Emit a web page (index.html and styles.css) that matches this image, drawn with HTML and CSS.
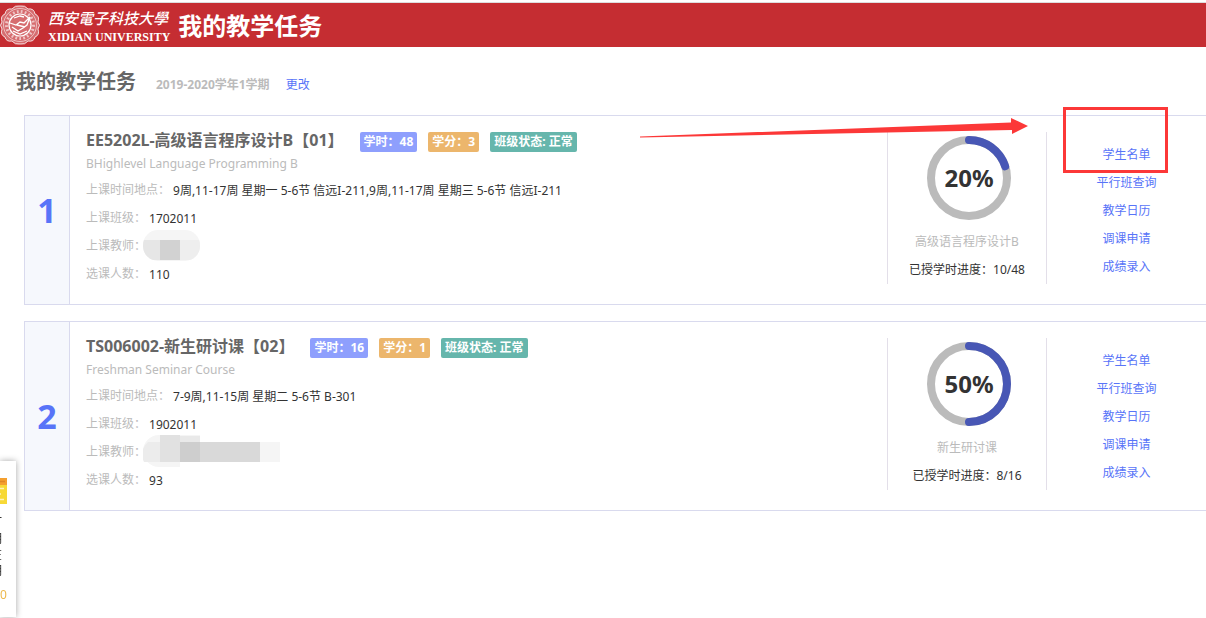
FILE: index.html
```
<!DOCTYPE html>
<html lang="zh-CN">
<head>
  <meta charset="UTF-8">
  <meta name="viewport" content="width=device-width, initial-scale=1.0">
  <title>我的教学任务</title>
  <link rel="stylesheet" href="styles.css">
</head>
<body>
  <header class="topbar">
    <svg class="emblem" viewBox="0 0 40 40" fill="none" stroke="#fff">
      <path d="M20 1Q25 0 28 4Q34 3 35 9Q40 11 38 17Q41 20 38 24Q40 30 35 32Q34 37 28 36Q25 40 20 39Q15 40 12 36Q6 37 5 32Q0 30 2 24Q-1 20 2 17Q0 11 5 9Q6 3 12 4Q15 0 20 1Z" fill="#fff" fill-opacity=".3" stroke-width="1" stroke-opacity=".8"/>
      <circle cx="20" cy="20" r="13.500" stroke-width="3" stroke-dasharray="1.800 2.200" opacity=".6"/>
      <circle cx="20" cy="20" r="16.500" stroke-width=".8" opacity=".7"/>
      <circle cx="20" cy="20" r="11" stroke-width="1.200"/>
      <path d="M10 18L16 20L20 17L24 18L30 12L27 20L23 23L18 26L12 22M13 26L20 29L27 26M14 13L20 11L24 12M17 20L25 22" stroke-width="1.300"/>
    </svg>
    <div class="school">
      <span class="school-cn">西安電子科技大學</span>
      <span class="school-en">XIDIAN UNIVERSITY</span>
    </div>
    <h1>我的教学任务</h1>
  </header>

  <main>
    <div class="page-title">
      <h2>我的教学任务</h2>
      <span class="term">2019-2020学年1学期</span>
      <a href="#">更改</a>
    </div>

    <section class="card">
      <div class="index">1</div>
      <div class="info">
        <div class="info-head">
          <h3>EE5202L-高级语言程序设计B【01】</h3>
          <span class="badge hours">学时：48</span>
          <span class="badge credit">学分：3</span>
          <span class="badge status">班级状态: 正常</span>
        </div>
        <p class="en-name">BHighlevel Language Programming B</p>
        <dl>
          <div class="row"><dt>上课时间地点：</dt><dd>9周,11-17周 星期一 5-6节 信远I-211,9周,11-17周 星期三 5-6节 信远I-211</dd></div>
          <div class="row"><dt>上课班级：</dt><dd>1702011</dd></div>
          <div class="row masked">
            <dt>上课教师：</dt>
            <dd>
              <svg width="57" height="31" viewBox="0 0 57 31">
                <clipPath id="pill"><rect width="57" height="31" rx="15"/></clipPath>
                <g clip-path="url(#pill)">
                  <rect width="57" height="31" fill="#f5f5f5"/>
                  <rect y="10" width="17" height="20" fill="#e6e6e6"/>
                  <rect x="17" y="10" width="20" height="20" fill="#d2d2d2"/>
                  <rect x="37" y="10" width="20" height="20" fill="#eee"/>
                </g>
              </svg>
            </dd>
          </div>
          <div class="row"><dt>选课人数：</dt><dd>110</dd></div>
        </dl>
      </div>
      <div class="progress">
        <div class="ring">
          <svg viewBox="0 0 84 84">
            <circle class="track" cx="42" cy="42" r="38"/>
            <circle class="bar" cx="42" cy="42" r="38" pathLength="100" stroke-dasharray="20 100"/>
          </svg>
          <strong>20%</strong>
        </div>
        <p class="course">高级语言程序设计B</p>
        <p>已授学时进度：10/48</p>
      </div>
      <nav class="links">
        <a href="#">学生名单</a>
        <a href="#">平行班查询</a>
        <a href="#">教学日历</a>
        <a href="#">调课申请</a>
        <a href="#">成绩录入</a>
      </nav>
      <svg class="arrow" viewBox="0 0 390 20"><path d="M1 18.500L372 4.500V0L389 8L373 16V12L1 19.500Z"/></svg>
      <span class="highlight"></span>
    </section>

    <section class="card">
      <div class="index">2</div>
      <div class="info">
        <div class="info-head">
          <h3>TS006002-新生研讨课【02】</h3>
          <span class="badge hours">学时：16</span>
          <span class="badge credit">学分：1</span>
          <span class="badge status">班级状态: 正常</span>
        </div>
        <p class="en-name">Freshman Seminar Course</p>
        <dl>
          <div class="row"><dt>上课时间地点：</dt><dd>7-9周,11-15周 星期二 5-6节 B-301</dd></div>
          <div class="row"><dt>上课班级：</dt><dd>1902011</dd></div>
          <div class="row masked">
            <dt>上课教师：</dt>
            <dd>
              <svg width="137" height="32" viewBox="0 0 137 32">
                <path d="M16 0H57V7H137V27H37V32H16A16 16 0 0 1 16 0Z" fill="#f5f5f5"/>
                <path d="M17 7V27H1A16 16 0 0 1 5 7Z" fill="#ececec"/>
                <rect x="17" width="20" height="27" fill="#e1e1e1"/>
                <rect x="37" y="1" width="20" height="6" fill="#e9e9e9"/>
                <rect x="37" y="7" width="20" height="20" fill="#cecece"/>
                <rect x="57" y="7" width="60" height="20" fill="#d9d9d9"/>
              </svg>
            </dd>
          </div>
          <div class="row"><dt>选课人数：</dt><dd>93</dd></div>
        </dl>
      </div>
      <div class="progress">
        <div class="ring">
          <svg viewBox="0 0 84 84">
            <circle class="track" cx="42" cy="42" r="38"/>
            <circle class="bar" cx="42" cy="42" r="38" pathLength="100" stroke-dasharray="50 100"/>
          </svg>
          <strong>50%</strong>
        </div>
        <p class="course">新生研讨课</p>
        <p>已授学时进度：8/16</p>
      </div>
      <nav class="links">
        <a href="#">学生名单</a>
        <a href="#">平行班查询</a>
        <a href="#">教学日历</a>
        <a href="#">调课申请</a>
        <a href="#">成绩录入</a>
      </nav>
    </section>
  </main>

  <!-- collapsed side panel, only its right edge shows -->
  <aside class="side-panel">
    <svg width="8" height="26" viewBox="0 0 8 26">
      <rect width="7" height="26" fill="#f7d936"/>
      <rect width="7" height="7" fill="#f49f2f"/>
      <path d="M0 3.500H5" stroke="#de8726" stroke-width="1.500"/>
      <path d="M0 10.500H4M0 16H1M0 21.500H4" stroke="#fff3b8" stroke-width="1.500"/>
    </svg>
    <div class="side-text">订明在明</div>
    <span class="side-count">0</span>
  </aside>
</body>
</html>
```
FILE: styles.css
```
:root {
  --red: #c52d32;
  --link: #5874f8;
  --muted: #bbb;
  --dark: #333;
  --line: #d9daee;
  --mark: #fc3838;
}

* {
  box-sizing: border-box;
  margin: 0;
  padding: 0;
}

body {
  font-family: "Noto Sans", "Noto Sans CJK SC", sans-serif;
  font-size: 12px;
  line-height: 28px;
  color: var(--dark);
  background: #fff;
  overflow-x: hidden;
}

a {
  color: var(--link);
  text-decoration: none;
}

.topbar {
  display: flex;
  align-items: center;
  height: 45px;
  margin-top: 2px;
  border-top: 1px solid #ddd;
  background: var(--red);
  color: #fff;
}

.emblem {
  width: 40px;
  height: 40px;
}

.school {
  display: flex;
  flex-direction: column;
  margin: 0 8px;
  white-space: nowrap;
}

.school-cn {
  font-size: 15px;
  font-style: italic;
  font-weight: 500;
  line-height: 24px;
}

.school-en {
  font-family: "Liberation Serif", serif;
  font-size: 12px;
  font-weight: bold;
  line-height: 14px;
}

h1 {
  padding-top: 2px;
  font-size: 24px;
}

.page-title {
  display: flex;
  align-items: baseline;
  height: 68px;
  padding: 21px 16px 0;
}

h2 {
  margin-right: 20px;
  font-size: 20px;
  color: #666;
}

.term {
  margin-right: 16px;
  font-weight: bold;
  color: var(--muted);
}

.card {
  position: relative;
  display: flex;
  margin: 0 0 16px 24px;
  border: 1px solid var(--line);
  border-right: none;
}

.index {
  display: flex;
  align-items: center;
  justify-content: center;
  width: 45px;
  border-right: 1px solid var(--line);
  background: #f6f8fd;
  font-size: 34px;
  font-weight: bold;
  color: var(--link);
}

.info {
  flex: 1;
  padding: 12px 16px;
}

.info-head {
  display: flex;
  align-items: flex-end;
  height: 24px;
}

h3 {
  margin-right: 16px;
  font-size: 16px;
  line-height: 24px;
  color: #666;
}

.badge {
  margin-right: 11px;
  padding: 0 4px;
  border-radius: 2px;
  font-weight: bold;
  line-height: 20px;
  color: #fff;
}

.hours {
  background: #8e9ffd;
}

.credit {
  background: #ecb66c;
}

.status {
  background: #66b6ac;
}

.en-name {
  line-height: 24px;
  color: var(--muted);
}

.row {
  display: flex;
  height: 28px;
}

dt {
  margin-right: 3px;
  color: var(--muted);
}

dd {
  padding-top: 1px;
}

.masked {
  align-items: center;
}

.masked dt {
  margin-right: -3px;
}

.masked dd {
  padding: 0 0 2px;
}

.masked svg {
  display: block;
}

.progress {
  width: 160px;
  margin: 16px 0 20px;
  padding-top: 4px;
  border: 1px solid #e3dfe9;
  border-width: 0 1px;
  text-align: center;
}

.ring {
  display: grid;
  place-items: center;
  width: 84px;
  margin: 0 auto 8px 39px;
}

.ring svg,
.ring strong {
  grid-area: 1 / 1;
}

.ring svg {
  display: block;
  width: 84px;
  height: 84px;
}

.ring circle {
  fill: none;
  stroke-width: 8;
}

.track {
  stroke: #bbb;
}

.bar {
  stroke: #4857b5;
  stroke-linecap: round;
  transform: rotate(-90deg);
  transform-origin: center;
}

.ring strong {
  font-size: 24px;
}

.course {
  color: var(--muted);
}

.links {
  display: flex;
  flex-direction: column;
  align-items: center;
  width: 159px;
  padding-top: 25px;
}

.arrow {
  position: absolute;
  top: 2px;
  right: 177px;
  width: 390px;
  height: 20px;
  fill: var(--mark);
}

.highlight {
  position: absolute;
  top: -9px;
  right: 38px;
  width: 105px;
  height: 66px;
  border: 3px solid var(--mark);
}

.side-panel {
  position: fixed;
  left: 0;
  bottom: 1px;
  width: 16px;
  height: 156px;
  padding-top: 17px;
  background: #fff;
  box-shadow: 0 0 6px rgba(0, 0, 0, 0.35);
}

.side-panel svg {
  display: block;
}

.side-text {
  width: 12px;
  margin: 11px 0 0 -10px;
  line-height: 16px;
}

.side-count {
  display: block;
  line-height: 32px;
  color: #edb84c;
}
```
